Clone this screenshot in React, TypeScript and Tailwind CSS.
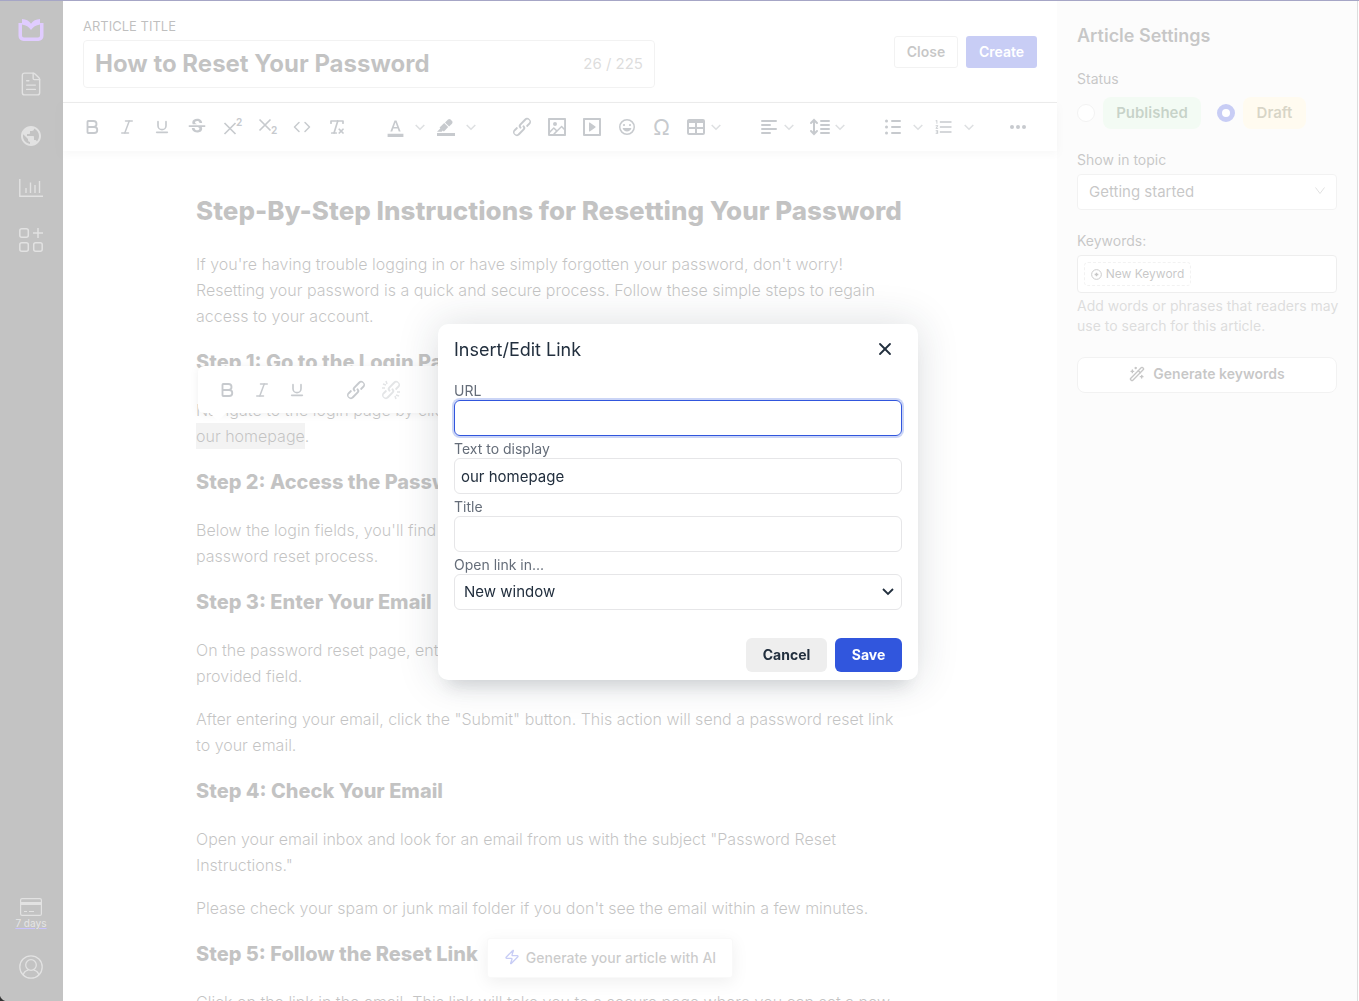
import { ReactNode } from "react";
import { Bold, Code, FileText, Italic, RemoveFormatting, Underline, WandSparkles, X, Zap } from "lucide-react";
import { MdFormatColorText, MdFormatListNumbered, MdPublic, MdStrikethroughS } from "react-icons/md";

const LINK_PATH =
  "M6.2 12.3a1 1 0 0 1 1.4 1.4l-2 2a2 2 0 1 0 2.6 2.8l4.8-4.8a1 1 0 0 0 0-1.4 1 1 0 1 1 1.4-1.3 2.9 2.9 0 0 1 0 4L9.6 20a3.9 3.9 0 0 1-5.5-5.5l2-2Zm11.6-.6a1 1 0 0 1-1.4-1.4l2-2a2 2 0 1 0-2.6-2.8L11 10.3a1 1 0 0 0 0 1.4A1 1 0 1 1 9.6 13a2.9 2.9 0 0 1 0-4L14.4 4a3.9 3.9 0 0 1 5.5 5.5l-2 2Z";

const article = [
  {
    title: "Step 2: Access the Password Reset Page",
    text: [["Below the login fields, you'll find the \"Forgot Password\" link. Click it to start the", "password reset process."]],
  },
  {
    title: "Step 3: Enter Your Email",
    text: [
      ["On the password reset page, enter the email linked to your account in the", "provided field."],
      ["After entering your email, click the \"Submit\" button. This action will send a password reset link", "to your email."],
    ],
  },
  {
    title: "Step 4: Check Your Email",
    text: [
      ["Open your email inbox and look for an email from us with the subject \"Password Reset", "Instructions.\""],
      ["Please check your spam or junk mail folder if you don't see the email within a few minutes."],
    ],
  },
  {
    title: "Step 5: Follow the Reset Link",
    text: [["Click on the link in the email. This link will take you to a secure page where you can set a new"]],
  },
];

function Glyph({ d, children }: { d?: string; children?: ReactNode }) {
  return (
    <svg className="w-6 h-6" viewBox="0 0 24 24" fill="currentColor" fillRule="evenodd">
      {d && <path d={d} />}
      {children}
    </svg>
  );
}

function Tool({ label, menu, tight, children }: { label: string; menu?: boolean; tight?: boolean; children: ReactNode }) {
  return (
    <button
      aria-label={label}
      className={`h-7 flex items-center ${menu ? "w-[51px] pl-[5px]" : "w-[35px] justify-center"} ${tight ? "gap-[3px]" : "gap-2"}`}
    >
      <span className="w-6 flex justify-center shrink-0">{children}</span>
      {menu && (
        <svg className="w-[10px] h-[10px] shrink-0 opacity-60" viewBox="0 0 10 10" fill="none" stroke="currentColor" strokeWidth="1.5">
          <path d="M.7 3 5 7.300 9.300 3" />
        </svg>
      )}
    </button>
  );
}

function Paragraph({ lines }: { lines: string[] }) {
  return (
    <p className="mb-[17px] whitespace-nowrap">
      {lines.map((line) => (
        <span key={line} className="block">{line}</span>
      ))}
    </p>
  );
}

function StepTitle({ children }: { children: ReactNode }) {
  return <h2 className="text-[20px] leading-[30px] font-extrabold mt-[18px] mb-5 whitespace-nowrap">{children}</h2>;
}

function Sidebar() {
  return (
    <nav className="w-[63px] shrink-0 bg-[#101010] text-[#8c8c8c] flex flex-col items-center pt-[18px] pr-px pb-[22px]">
      <a href="#home" aria-label="Home" className="text-[#8535ff]">
        <svg className="w-[26px] h-6" viewBox="0 0 26 24" fill="currentColor" fillRule="evenodd">
          <path d="M.5 5H4V1c4 .2 7 1.800 9 4.800C15 2.800 18 1.200 22 1v4h3.500v13a5 5 0 0 1-5 5h-15a5 5 0 0 1-5-5ZM4 8v9.500A2 2 0 0 0 6 19.500h14a2 2 0 0 0 2-2V6.500c-4 .5-7 2.500-9 5.500-2-3-5-5-9-5.500Z" />
        </svg>
      </a>
      <a href="#articles" aria-label="Articles" className="mt-[29px]">
        <FileText className="w-[26px] h-[26px]" strokeWidth={1.3} />
      </a>
      <a href="#site" aria-label="Site" className="mt-[27px]">
        <MdPublic className="w-6 h-6" />
      </a>
      <a href="#reports" aria-label="Reports" className="mt-7">
        <svg className="w-6 h-6" viewBox="0 0 24 24" fill="none" stroke="currentColor" strokeWidth="1.400">
          <path d="M.8 3v17.300H24M7 12v5M11.500 6.500V17M16 9v8M20.500 5v12" />
        </svg>
      </a>
      <a href="#apps" aria-label="Apps" className="mt-7">
        <svg className="w-6 h-6" viewBox="0 0 24 24" fill="none" stroke="currentColor" strokeWidth="1.500">
          <rect x=".8" y=".8" width="8.500" height="8.500" rx="2" />
          <rect x=".8" y="14.700" width="8.500" height="8.500" rx="2" />
          <rect x="14.700" y="14.700" width="8.500" height="8.500" rx="2" />
          <path d="M19 0v10M14 5h10" />
        </svg>
      </a>
      <a href="#billing" className="mt-auto flex flex-col items-center text-[10px] leading-3 font-medium">
        <svg className="w-[22px] h-[18px] mb-px" viewBox="0 0 22 18" fill="none" stroke="currentColor" strokeWidth="1.200">
          <rect x=".6" y=".6" width="20.800" height="16.800" rx="1.500" />
          <path d="M1 5.500h20" strokeWidth="3" />
          <path d="M4 13.500h3M9 13.500h5" />
        </svg>
        <span className="underline decoration-[#2a10ff]">7 days</span>
      </a>
      <a href="#account" aria-label="Account" className="mt-[26px]">
        <svg className="w-6 h-6" viewBox="0 0 24 24" fill="none" stroke="currentColor" strokeWidth="1.300">
          <circle cx="12" cy="12" r="11.200" />
          <circle cx="12" cy="10" r="5.300" />
          <path d="M4.300 20c.5-3 2.700-4.500 5-4.900M19.700 20c-.5-3-2.700-4.500-5-4.900" />
        </svg>
      </a>
    </nav>
  );
}

function Toolbar() {
  return (
    <div className="relative z-10 h-[48px] shrink-0 flex items-center pl-[11px] text-[#222f3e] bg-white shadow-[0_3px_8px_rgba(0,0,0,0.12)] overflow-hidden">
      <Tool label="Bold"><Bold className="w-[18px] h-[18px]" strokeWidth={2.5} /></Tool>
      <Tool label="Italic"><Italic className="w-[18px] h-[18px]" strokeWidth={2} /></Tool>
      <Tool label="Underline"><Underline className="w-4 h-4" strokeWidth={2.5} /></Tool>
      <Tool label="Strikethrough"><MdStrikethroughS className="w-[22px] h-[22px]" /></Tool>
      <Tool label="Superscript">
        <Glyph>
          <path d="m4.500 8 11 11M15.500 8l-11 11" stroke="currentColor" strokeWidth="1.700" />
          <text x="16" y="11" fontSize="10" fontWeight="700">2</text>
        </Glyph>
      </Tool>
      <Tool label="Subscript">
        <Glyph>
          <path d="m4.500 4.500 11 11M15.500 4.500l-11 11" stroke="currentColor" strokeWidth="1.700" />
          <text x="16" y="19" fontSize="10" fontWeight="700">2</text>
        </Glyph>
      </Tool>
      <Tool label="Source code"><Code className="w-[18px] h-[18px]" /></Tool>
      <Tool label="Clear formatting"><RemoveFormatting className="w-[18px] h-[18px]" strokeWidth={2.3} /></Tool>
      <div className="flex ml-6">
        <Tool label="Text color" menu><MdFormatColorText className="w-[19px] h-[19px]" /></Tool>
        <Tool label="Highlight color" menu>
          <Glyph d="M3 18h18v3H3ZM7.700 16.700H3l3.300-3.300-.7-.8L10.200 8l4 4.100-4 4.200c-.2.2-.6.2-.8 0l-.6-.7-1.100 1.100zm5-7.500L11 7.400l3-2.900a2 2 0 0 1 2.600 0L18 6c.7.7.7 2 0 2.700l-2.900 2.900-1.800-1.800-.5-.6" />
        </Tool>
      </div>
      <div className="flex ml-6">
        <Tool label="Link"><Glyph d={LINK_PATH} /></Tool>
        <Tool label="Image">
          <Glyph d="m5 15.700 3.300-3.200c.3-.3.7-.3 1 0L12 15l4.100-4c.3-.4.8-.4 1 0l2 1.900V5H5v10.700ZM5 18V19h3l2.800-2.900-2-2L5 17.900Zm14-3-2.500-2.400-6.400 6.500H19v-4ZM4 3h16c.6 0 1 .4 1 1v16c0 .6-.4 1-1 1H4a1 1 0 0 1-1-1V4c0-.6.4-1 1-1Zm6 8a2 2 0 1 0 0-4 2 2 0 0 0 0 4Z" />
        </Tool>
        <Tool label="Media">
          <Glyph d="M4 3h16c.6 0 1 .4 1 1v16c0 .6-.4 1-1 1H4a1 1 0 0 1-1-1V4c0-.6.4-1 1-1Zm1 2v14h14V5H5Zm4.800 2.600 5.600 4a.5.5 0 0 1 0 .8l-5.600 4A.5.5 0 0 1 9 16V8a.5.5 0 0 1 .8-.4Z" />
        </Tool>
        <Tool label="Emojis">
          <Glyph d="M9 11c.6 0 1-.4 1-1s-.4-1-1-1a1 1 0 0 0-1 1c0 .6.4 1 1 1Zm6 0c.6 0 1-.4 1-1s-.4-1-1-1a1 1 0 0 0-1 1c0 .6.4 1 1 1Zm-3 5.500c2.100 0 4-1.500 4.400-3.500H7.600c.5 2 2.300 3.500 4.400 3.500ZM12 4a8 8 0 1 0 0 16 8 8 0 0 0 0-16Zm0 14.500a6.500 6.500 0 1 1 0-13 6.500 6.500 0 0 1 0 13Z" />
        </Tool>
        <Tool label="Special character"><span className="text-[22px] leading-6">Ω</span></Tool>
        <Tool label="Table" menu tight>
          <Glyph d="M19 4a2 2 0 0 1 2 2v12a2 2 0 0 1-2 2H5a2 2 0 0 1-2-2V6c0-1.100.9-2 2-2h14ZM5 14v4h6v-4H5Zm14 0h-6v4h6v-4Zm0-6h-6v4h6V8ZM5 12h6V8H5v4Z" />
        </Tool>
      </div>
      <div className="flex ml-[22px]">
        <Tool label="Align" menu tight>
          <Glyph><path d="M5 6h14M5 10h8M5 14h14M5 18h8" stroke="currentColor" strokeWidth="2" strokeLinecap="round" /></Glyph>
        </Tool>
        <Tool label="Line height" menu tight>
          <Glyph><path d="M13 6h8M13 10h8M13 14h8M13 18h8M6 5.500v13M3 8l3-3 3 3M3 16l3 3 3-3" fill="none" stroke="currentColor" strokeWidth="2" strokeLinecap="round" /></Glyph>
        </Tool>
      </div>
      <div className="flex ml-[22px]">
        <Tool label="Bullet list" menu>
          <Glyph><path d="M11 6h8M11 12h8M11 18h8" stroke="currentColor" strokeWidth="2" strokeLinecap="round" /><path d="M5.500 6h.01M5.500 12h.01M5.500 18h.01" stroke="currentColor" strokeWidth="3" strokeLinecap="round" /></Glyph>
        </Tool>
        <Tool label="Numbered list" menu><MdFormatListNumbered className="w-5 h-5" /></Tool>
      </div>
      <div className="flex ml-[22px]">
        <Tool label="More">
          <Glyph><circle cx="6" cy="12" r="2" /><circle cx="12" cy="12" r="2" /><circle cx="18" cy="12" r="2" /></Glyph>
        </Tool>
      </div>
    </div>
  );
}

function SelectionToolbar() {
  return (
    <span className="absolute left-[2px] top-[-31px] w-[320px] h-[47px] flex items-center pl-[11px] bg-white rounded-[6px] shadow-[0_1px_8px_rgba(0,0,0,0.25)] text-[#222f3e]">
      <Tool label="Bold selection"><Bold className="w-[18px] h-[18px]" strokeWidth={2.5} /></Tool>
      <Tool label="Italicize selection"><Italic className="w-[18px] h-[18px]" strokeWidth={2} /></Tool>
      <Tool label="Underline selection"><Underline className="w-4 h-4" strokeWidth={2.5} /></Tool>
      <span className="flex ml-6">
        <Tool label="Link selection"><Glyph d={LINK_PATH} /></Tool>
        <Tool label="Remove link">
          <span className="opacity-50">
            <Glyph d={LINK_PATH}><path d="M4 6l3 1M7 3l1 3M3 10h3M20 18l-3-1M17 21l-1-3M21 14h-3" stroke="currentColor" strokeWidth="1.500" /></Glyph>
          </span>
        </Tool>
      </span>
      <span className="absolute left-3 top-full border-x-8 border-x-transparent border-t-8 border-t-white" />
    </span>
  );
}

function Editor() {
  return (
    <main className="flex-1 min-w-0 flex flex-col bg-white text-black relative">
      <header className="h-[103px] shrink-0 border-b border-[#b4b4b4] flex items-start justify-between px-5">
        <div className="pt-4 w-[572px]">
          <label htmlFor="article-title" className="block text-[13px] leading-5 mb-1">ARTICLE TITLE</label>
          <div className="h-12 flex items-center border border-[#ccc] rounded-[4px] px-[11px]">
            <input id="article-title" defaultValue="How to Reset Your Password" className="flex-1 min-w-0 text-[24px] font-bold outline-none text-[#111]" />
            <span className="text-[15px] text-[#777]">26 / 225</span>
          </div>
        </div>
        <div className="flex gap-2 pt-9 text-[14px] font-semibold">
          <button className="h-8 w-16 pb-[2px] border border-[#ccc] rounded-[3px] text-[#222]">Close</button>
          <button className="h-8 w-[71px] pb-[2px] rounded-[3px] bg-[#2438d8] text-white">Create</button>
        </div>
      </header>
      <Toolbar />
      <article className="flex-1 min-h-0 overflow-hidden pl-[133px] pt-[44px] text-[16px] leading-[26px] font-light text-[#111]">
        <h1 className="text-[26px] leading-8 font-extrabold mb-6 whitespace-nowrap">Step-By-Step Instructions for Resetting Your Password</h1>
        <Paragraph
          lines={[
            "If you're having trouble logging in or have simply forgotten your password, don't worry!",
            "Resetting your password is a quick and secure process. Follow these simple steps to regain",
            "access to your account.",
          ]}
        />
        <StepTitle>Step 1: Go to the Login Page</StepTitle>
        <p className="relative whitespace-nowrap">
          <span className="block">Navigate to the login page by clicking</span>
          <span className="inline-block bg-[#d0d0d0]">our homepage</span>.
          <SelectionToolbar />
        </p>
        {article.map((step) => (
          <section key={step.title}>
            <StepTitle>{step.title}</StepTitle>
            {step.text.map((lines) => (
              <Paragraph key={lines[0]} lines={lines} />
            ))}
          </section>
        ))}
      </article>
      <button className="absolute z-10 bottom-[23px] left-[424px] w-[246px] h-10 pb-[2px] flex items-center justify-center gap-[6px] bg-white border border-[#e5e5e5] rounded-[3px] shadow-[0_4px_16px_rgba(0,0,0,0.25)] text-[14px] font-medium text-[#333]">
        <Zap className="w-4 h-4 text-[#2438d8]" />
        Generate your article with AI
      </button>
    </main>
  );
}

function Settings() {
  return (
    <aside className="w-[301px] mr-px shrink-0 bg-[#f2f2f2] border-r border-[#777] px-5 pt-6 text-[14px] leading-5 text-[#222]">
      <h2 className="text-[18px] leading-6 font-semibold mb-[21px]">Article Settings</h2>
      <p className="mb-2">Status</p>
      <div className="flex items-center mb-[21px] text-[15px] font-semibold">
        <label className="flex items-center mr-4">
          <input type="radio" name="status" className="appearance-none w-[18px] h-[18px] rounded-full border border-[#ccc] bg-white mr-2" />
          <span className="h-8 w-[98px] flex items-center justify-center rounded-lg bg-[#d0f0d2] text-[#23502a]">Published</span>
        </label>
        <label className="flex items-center">
          <input type="radio" name="status" defaultChecked className="appearance-none w-[18px] h-[18px] rounded-full border-[5px] border-[#2438d8] bg-white mr-2" />
          <span className="h-8 w-[63px] flex items-center justify-center rounded-lg bg-[#fff0c4] text-[#665a20]">Draft</span>
        </label>
      </div>
      <label htmlFor="topic" className="block mb-1">Show in topic</label>
      <div className="relative mb-[21px]">
        <select id="topic" className="appearance-none w-full h-9 px-[11px] bg-white border border-[#ccc] rounded-[4px] text-[15px]">
          <option>Getting started</option>
        </select>
        <svg className="absolute right-3 top-3 w-[10px] h-[10px] text-[#888] pointer-events-none" viewBox="0 0 10 10" fill="none" stroke="currentColor">
          <path d="m.5 1.500 4.500 6 4.500-6" />
        </svg>
      </div>
      <p className="mb-1">Keywords:</p>
      <div className="h-[38px] bg-white border border-[#bbb] rounded-[4px] px-[6px] flex items-center">
        <button className="h-6 w-[107px] flex items-center justify-center gap-1 border border-dashed border-[#ccc] rounded-[4px] text-[12px]">
          <svg className="w-[11px] h-[11px]" viewBox="0 0 12 12" fill="none" stroke="currentColor">
            <circle cx="6" cy="6" r="5.300" />
            <path d="M6 4v4M4 6h4" strokeWidth="1.500" />
          </svg>
          New Keyword
        </button>
      </div>
      <p className="mt-[3px] mb-[21px] text-[#777] whitespace-nowrap">
        Add words or phrases that readers may
        <br />
        use to search for this article.
      </p>
      <button className="w-full h-9 pb-[2px] flex items-center justify-center gap-2 bg-white border border-[#ccc] rounded-lg text-[14px] font-semibold">
        <WandSparkles className="w-4 h-4" />
        Generate keywords
      </button>
    </aside>
  );
}

function LinkDialog() {
  const field = "block w-full h-9 mb-1 rounded-[6px] border border-[#e6e6e8] text-[15px] text-[#222f3e] bg-white outline-none";
  const label = "block text-[14px] leading-[18px] text-[#656d79]";
  return (
    <div role="dialog" aria-labelledby="link-title" className="relative w-[480px] rounded-[10px] bg-white text-[#222f3e] shadow-[0_16px_16px_-10px_rgba(34,47,62,0.15),0_0_40px_1px_rgba(34,47,62,0.15)]">
      <div className="flex items-center justify-between h-[50px] pl-4 pr-[23px]">
        <h2 id="link-title" className="text-[18px]">Insert/Edit Link</h2>
        <button aria-label="Close dialog"><X className="w-5 h-5" strokeWidth={2.2} /></button>
      </div>
      <form className="px-4 pt-2 pb-6">
        <label htmlFor="url" className={label}>URL</label>
        <input id="url" className="block w-full h-9 mb-1 rounded-[6px] border border-[#3156dd] ring-2 ring-[#3156dd]/25 px-[6px] outline-none" />
        <label htmlFor="display" className={label}>Text to display</label>
        <input id="display" defaultValue="our homepage" className={`px-[6px] ${field}`} />
        <label htmlFor="title" className={label}>Title</label>
        <input id="title" className={`px-[6px] ${field}`} />
        <label htmlFor="target" className={label}>Open link in...</label>
        <div className="relative">
          <select id="target" className={`appearance-none px-[9px] ${field}`}>
            <option>New window</option>
          </select>
          <svg className="absolute right-2 top-[13px] w-3 h-[10px] pointer-events-none" viewBox="0 0 12 10" fill="none" stroke="currentColor" strokeWidth="1.800">
            <path d="m1 2 5 5 5-5" />
          </svg>
        </div>
      </form>
      <div className="flex justify-end gap-2 px-4 pb-2 text-[14px] font-bold">
        <button className="h-[34px] w-[81px] pb-[2px] rounded-[6px] bg-[#eee]">Cancel</button>
        <button className="h-[34px] w-[67px] pb-[2px] rounded-[6px] bg-[#3156dd] text-white">Save</button>
      </div>
    </div>
  );
}

export default function App() {
  return (
    <div className="relative h-screen overflow-hidden font-[Inter,sans-serif]">
      <div className="flex h-full bg-white">
        <Sidebar />
        <Editor />
        <Settings />
      </div>
      <div className="fixed inset-0 z-20 flex items-center justify-center pr-[3px] pt-[2px] bg-white/75 border-t border-[#a6a6c6]">
        {/* soft shade and rounded window corner */}
        <div className="absolute bottom-0 left-0 w-[130px] h-[50px] bg-[radial-gradient(ellipse_closest-side_at_0_100%,rgba(0,0,0,0.18),transparent)] bg-[radial-gradient(130px_50px_at_0_100%,rgba(0,0,0,0.2),transparent)]" />
        <div className="absolute bottom-0 left-0 w-2 h-2 bg-[radial-gradient(circle_at_top_right,transparent_8px,#333_9px)]" />
        <LinkDialog />
      </div>
    </div>
  );
}
